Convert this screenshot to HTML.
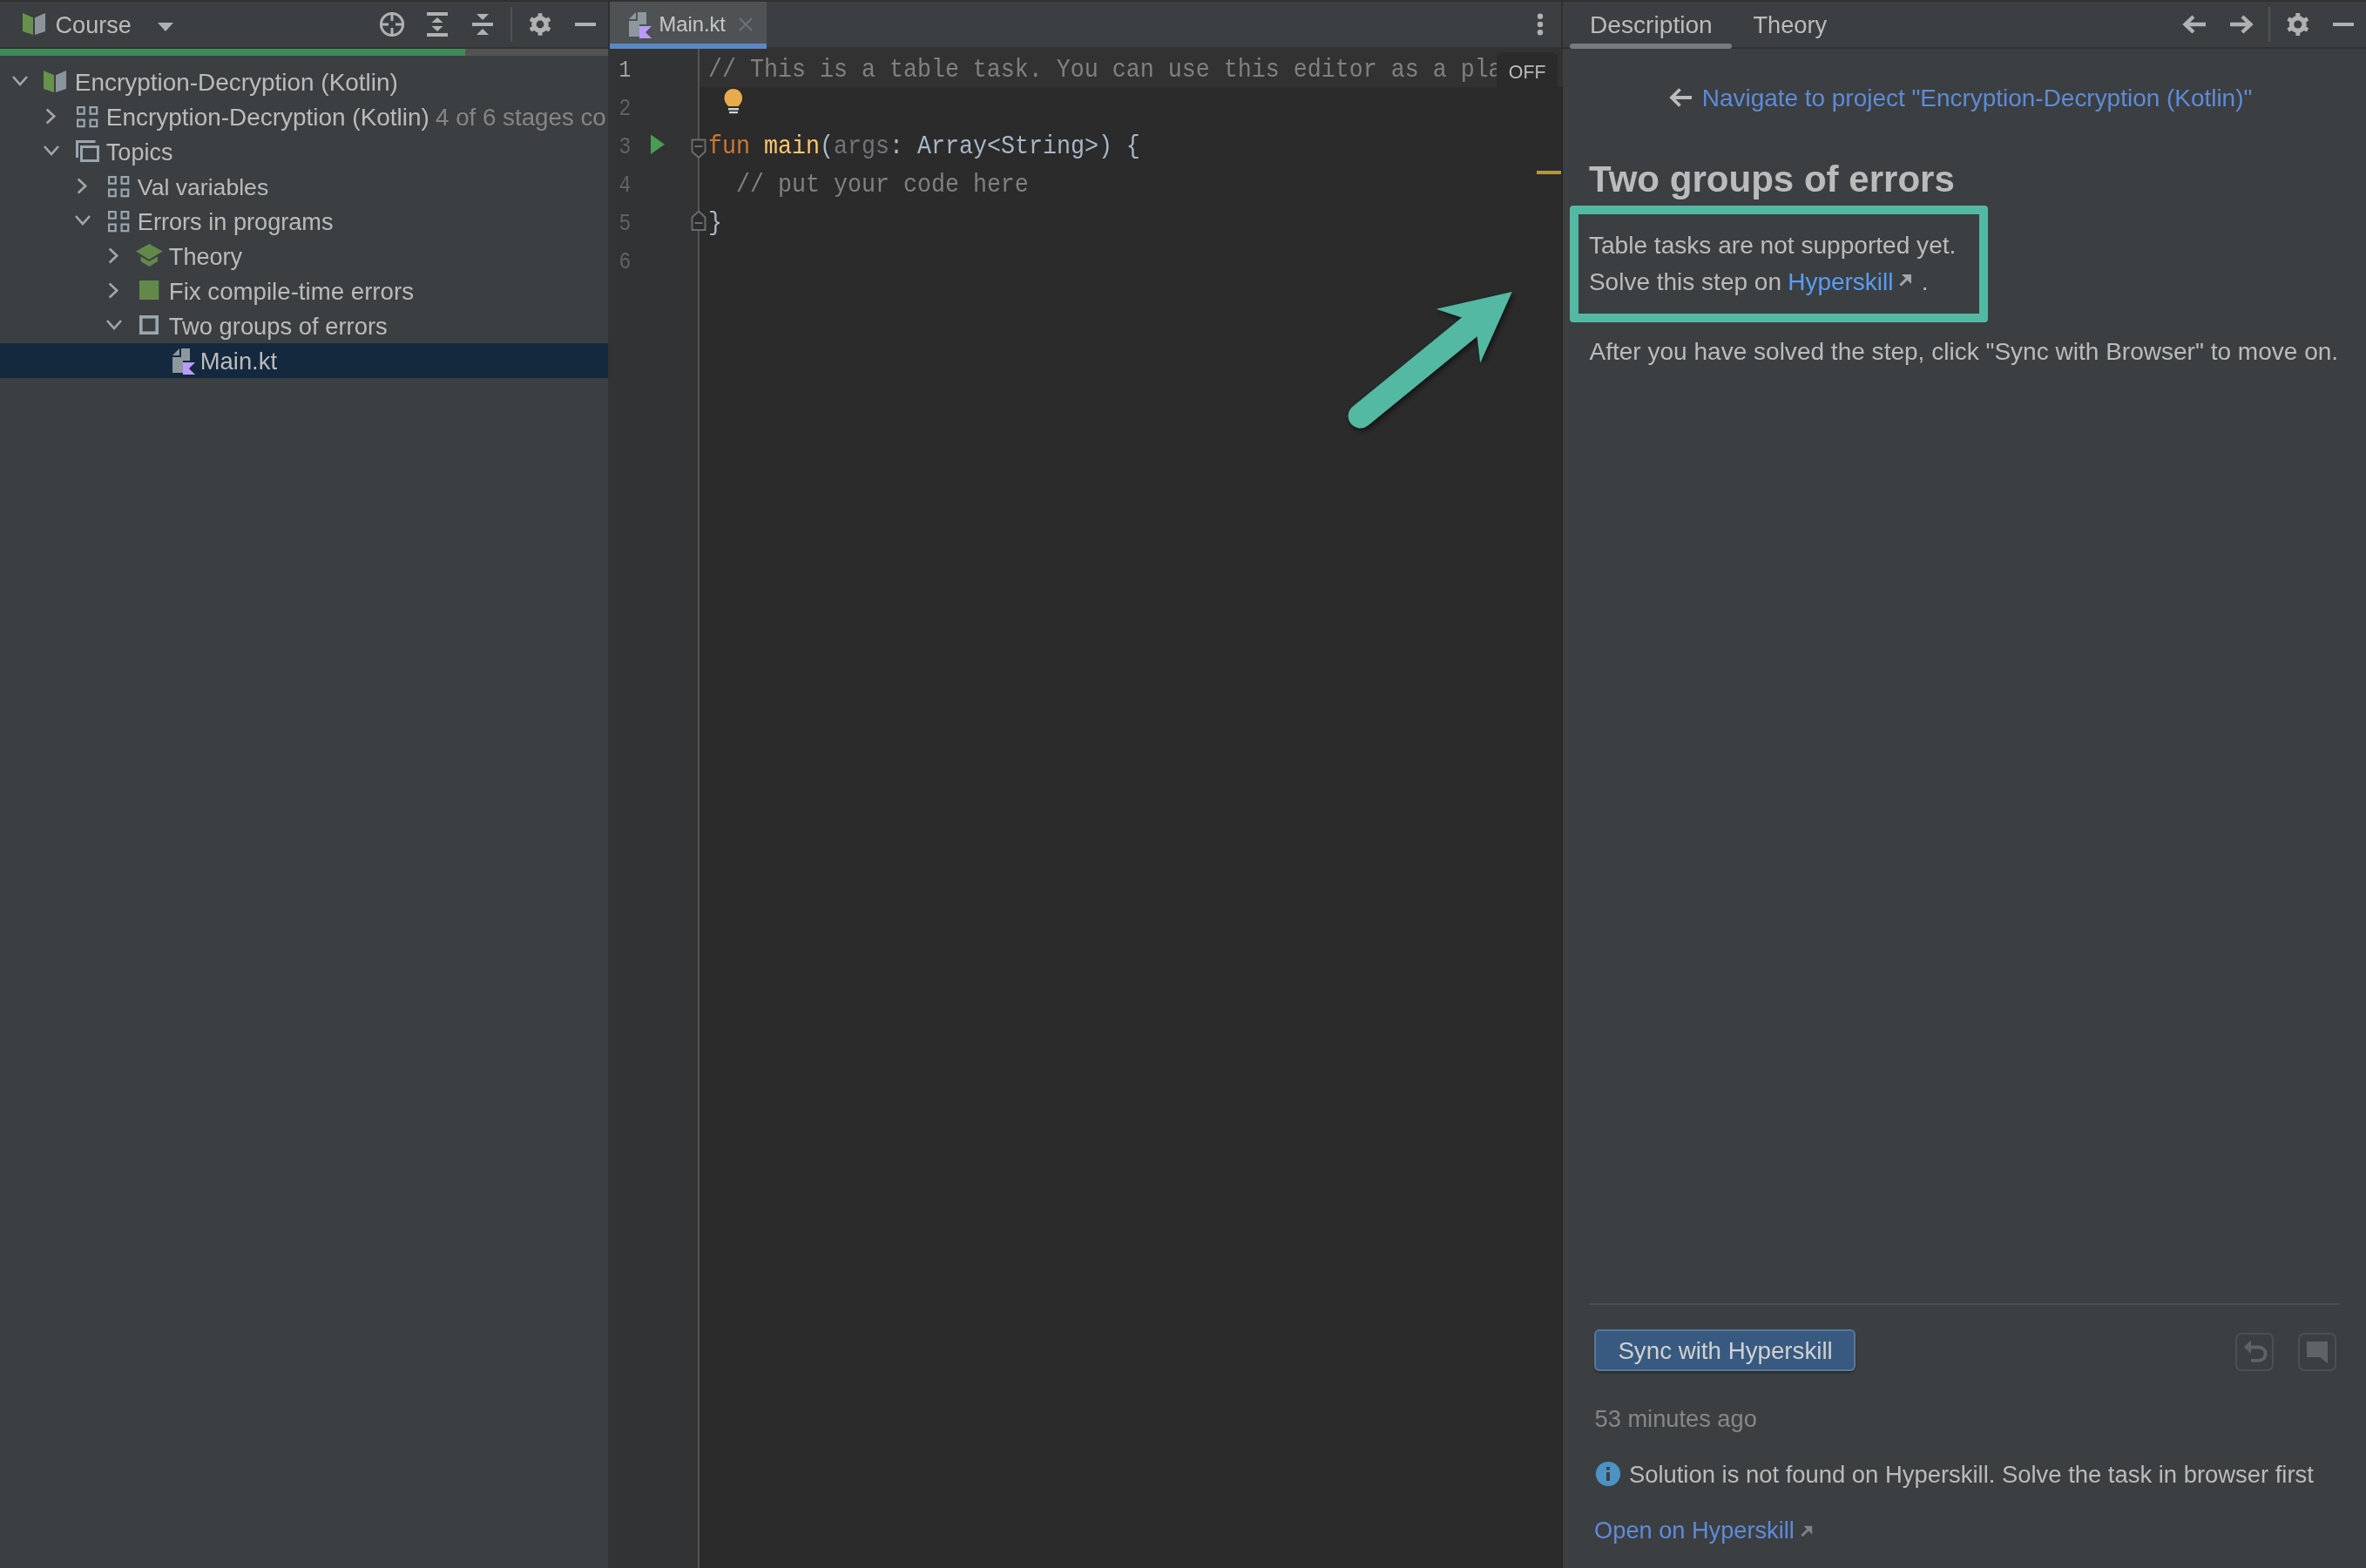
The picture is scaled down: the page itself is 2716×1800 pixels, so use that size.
<!DOCTYPE html>
<html><head><meta charset="utf-8"><title>Course - Encryption-Decryption (Kotlin)</title>
<style>
html,body{margin:0;padding:0;background:#3c3f41;overflow:hidden;width:2716px;height:1800px}
svg{display:block}
text{white-space:pre}
svg{will-change:transform}
</style></head><body>
<svg width="2716" height="1800" viewBox="0 0 2716 1800">
<defs><clipPath id="clipL"><rect x="0" y="0" width="697" height="1800"/></clipPath></defs>
<rect x="0" y="0" width="2716" height="1800" fill="#3c3f41" />
<rect x="0" y="0" width="2716" height="2" fill="#313131" />
<rect x="0" y="54" width="698" height="2" fill="#323232" />
<rect x="0" y="56" width="534" height="8" fill="#3f8c58" />
<rect x="534" y="56" width="164" height="8" fill="#535353" />
<rect x="0" y="394" width="698" height="40" fill="#14293e" />
<rect x="698" y="2" width="2" height="54" fill="#303030" />
<rect x="700" y="54" width="1092" height="2" fill="#323232" />
<rect x="700" y="2" width="180" height="48" fill="#4e5254" />
<rect x="700" y="50" width="180" height="6" fill="#5889c6" />
<rect x="698" y="56" width="103" height="1744" fill="#313335" />
<rect x="801" y="56" width="2" height="1744" fill="#555555" />
<rect x="803" y="56" width="989" height="1744" fill="#2b2b2b" />
<rect x="803" y="56" width="989" height="44" fill="#323232" />
<rect x="1792" y="2" width="2" height="1798" fill="#282828" />
<rect x="1792" y="2" width="2" height="52" fill="#303030" />
<rect x="1792" y="56" width="2" height="44" fill="#323232" />
<rect x="1794" y="54" width="922" height="2" fill="#323232" />
<rect x="1802" y="50" width="186" height="6" fill="#767b80" rx="3" />
<polygon points="26.00,14.90 38.00,20.20 38.00,40.00 26.00,35.90" fill="#66924c"/>
<polygon points="40.00,20.20 52.00,14.90 52.00,35.90 40.00,40.00" fill="#8b939b"/>
<text x="63.54500000000001" y="37.9" font-family='"Liberation Sans", sans-serif' font-size="27.1" font-weight="400" fill="#bbbbbb" >Course</text>
<polygon points="181,26 199,26 190,36" fill="#afb1b3"/>
<circle cx="450" cy="28" r="12.6" fill="none" stroke="#afb1b3" stroke-width="3"/>
<path d="M450 14 V24 M450 32 V42 M436 28 H446 M454 28 H464" stroke="#afb1b3" stroke-width="3"/>
<rect x="490" y="14" width="24" height="4" fill="#afb1b3"/><rect x="490" y="38" width="24" height="4" fill="#afb1b3"/>
<polygon points="495.5,26 508.5,26 502,20" fill="#afb1b3"/><polygon points="495.5,30 508.5,30 502,36" fill="#afb1b3"/>
<rect x="542" y="26" width="24" height="4" fill="#afb1b3"/>
<polygon points="547,16 561,16 554,23" fill="#afb1b3"/><polygon points="547,40 561,40 554,33" fill="#afb1b3"/>
<rect x="586" y="8" width="2" height="40" fill="#515151" />
<g fill="#afb1b3"><circle cx="620" cy="28" r="9.799999999999999"/><rect x="617.5" y="15.2" width="5.0" height="12.8" rx="0.8" transform="rotate(0.0 620 28)"/><rect x="617.5" y="15.2" width="5.0" height="12.8" rx="0.8" transform="rotate(60.0 620 28)"/><rect x="617.5" y="15.2" width="5.0" height="12.8" rx="0.8" transform="rotate(120.0 620 28)"/><rect x="617.5" y="15.2" width="5.0" height="12.8" rx="0.8" transform="rotate(180.0 620 28)"/><rect x="617.5" y="15.2" width="5.0" height="12.8" rx="0.8" transform="rotate(240.0 620 28)"/><rect x="617.5" y="15.2" width="5.0" height="12.8" rx="0.8" transform="rotate(300.0 620 28)"/></g><circle cx="620" cy="28" r="4.4" fill="#3c3f41"/>
<rect x="660" y="26" width="24" height="4" fill="#afb1b3" />
<path d="M15 88 L23 97 L31 88" fill="none" stroke="#a4a6a8" stroke-width="2.6"/>
<polygon points="50.00,81.00 62.00,86.30 62.00,106.10 50.00,102.00" fill="#66924c"/>
<polygon points="64.00,86.30 76.00,81.00 76.00,102.00 64.00,106.10" fill="#8b939b"/>
<text x="85.764" y="103.7" font-family='"Liberation Sans", sans-serif' font-size="27.95" font-weight="400" fill="#bbbbbb" >Encryption-Decryption (Kotlin)</text>
<path d="M53.7 125.5 L62.2 133.5 L53.7 141.5" fill="none" stroke="#a4a6a8" stroke-width="2.6"/>
<rect x="89.1" y="123.1" width="7.6" height="7.6" fill="none" stroke="#9aa7b0" stroke-width="2.2"/><rect x="89.1" y="137.6" width="7.6" height="7.6" fill="none" stroke="#9aa7b0" stroke-width="2.2"/><rect x="103.6" y="123.1" width="7.6" height="7.6" fill="none" stroke="#9aa7b0" stroke-width="2.2"/><rect x="103.6" y="137.6" width="7.6" height="7.6" fill="none" stroke="#9aa7b0" stroke-width="2.2"/>
<text x="121.764" y="143.7" font-family='"Liberation Sans", sans-serif' font-size="27.95" font-weight="400" fill="#bbbbbb" >Encryption-Decryption (Kotlin)</text>
<path d="M51 168 L59 177 L67 168" fill="none" stroke="#a4a6a8" stroke-width="2.6"/>
<path d="M88.5 181 V162.5 H109.5" fill="none" stroke="#9aa7b0" stroke-width="3"/>
<rect x="93.5" y="168.5" width="19" height="16" fill="none" stroke="#9aa7b0" stroke-width="3"/>
<text x="121.8368" y="183.7" font-family='"Liberation Sans", sans-serif' font-size="27.04" font-weight="400" fill="#bbbbbb" >Topics</text>
<path d="M89.7 205.5 L98.2 213.5 L89.7 221.5" fill="none" stroke="#a4a6a8" stroke-width="2.6"/>
<rect x="125.1" y="203.1" width="7.6" height="7.6" fill="none" stroke="#9aa7b0" stroke-width="2.2"/><rect x="125.1" y="217.6" width="7.6" height="7.6" fill="none" stroke="#9aa7b0" stroke-width="2.2"/><rect x="139.6" y="203.1" width="7.6" height="7.6" fill="none" stroke="#9aa7b0" stroke-width="2.2"/><rect x="139.6" y="217.6" width="7.6" height="7.6" fill="none" stroke="#9aa7b0" stroke-width="2.2"/>
<text x="157.8704" y="223.7" font-family='"Liberation Sans", sans-serif' font-size="26.62" font-weight="400" fill="#bbbbbb" >Val variables</text>
<path d="M87 248 L95 257 L103 248" fill="none" stroke="#a4a6a8" stroke-width="2.6"/>
<rect x="125.1" y="243.1" width="7.6" height="7.6" fill="none" stroke="#9aa7b0" stroke-width="2.2"/><rect x="125.1" y="257.6" width="7.6" height="7.6" fill="none" stroke="#9aa7b0" stroke-width="2.2"/><rect x="139.6" y="243.1" width="7.6" height="7.6" fill="none" stroke="#9aa7b0" stroke-width="2.2"/><rect x="139.6" y="257.6" width="7.6" height="7.6" fill="none" stroke="#9aa7b0" stroke-width="2.2"/>
<text x="157.828" y="263.7" font-family='"Liberation Sans", sans-serif' font-size="27.15" font-weight="400" fill="#bbbbbb" >Errors in programs</text>
<path d="M125.7 285.5 L134.2 293.5 L125.7 301.5" fill="none" stroke="#a4a6a8" stroke-width="2.6"/>
<polygon points="156,288.5 171.3,280 186.6,288.5 171.3,298" fill="#62894a"/>
<polygon points="161.6,294.5 171.3,300 181,294.5 181,300 171.3,306 161.6,300" fill="#62894a"/>
<text x="193.832" y="303.7" font-family='"Liberation Sans", sans-serif' font-size="27.1" font-weight="400" fill="#bbbbbb" >Theory</text>
<path d="M125.7 325.5 L134.2 333.5 L125.7 341.5" fill="none" stroke="#a4a6a8" stroke-width="2.6"/>
<rect x="160" y="322" width="22.3" height="22" fill="#62894a" />
<text x="193.7872" y="343.7" font-family='"Liberation Sans", sans-serif' font-size="27.66" font-weight="400" fill="#bbbbbb" >Fix compile-time errors</text>
<path d="M123 368 L131 377 L139 368" fill="none" stroke="#a4a6a8" stroke-width="2.6"/>
<rect x="161.8" y="363.8" width="18.4" height="18.4" fill="none" stroke="#9aa7b0" stroke-width="3.6"/>
<text x="193.8112" y="383.7" font-family='"Liberation Sans", sans-serif' font-size="27.36" font-weight="400" fill="#bbbbbb" >Two groups of errors</text>
<text x="229.8104" y="423.7" font-family='"Liberation Sans", sans-serif' font-size="27.37" font-weight="400" fill="#bbbbbb" >Main.kt</text>
<polygon points="198.00,408.00 206.00,400.00 206.00,408.00" fill="#8d979e"/>
<polygon points="208.00,400.00 218.00,400.00 218.00,414.00 210.00,414.00 210.00,428.00 198.00,428.00 198.00,410.00 208.00,410.00" fill="#8d979e"/>
<polygon points="210.00,416.00 224.00,416.00 217.00,423.00 224.00,430.00 210.00,430.00" fill="#b99bf8"/>
<g clip-path="url(#clipL)">
<text x="500.04540000000003" y="143.6" font-family='"Liberation Sans", sans-serif' font-size="27.73" font-weight="400" fill="#858585" >4 of 6 stages completed</text>
</g>
<rect x="698" y="56" width="0" height="0" fill="none" />
<polygon points="722.00,22.00 730.00,14.00 730.00,22.00" fill="#8d979e"/>
<polygon points="732.00,14.00 742.00,14.00 742.00,28.00 734.00,28.00 734.00,42.00 722.00,42.00 722.00,24.00 732.00,24.00" fill="#8d979e"/>
<polygon points="734.00,30.00 748.00,30.00 741.00,37.00 748.00,44.00 734.00,44.00" fill="#b99bf8"/>
<text x="756.6048" y="36" font-family='"Liberation Sans", sans-serif' font-size="23.69" font-weight="400" fill="#c8c8c8" >Main.kt</text>
<path d="M849 21 L863 35 M863 21 L849 35" stroke="#6f7375" stroke-width="2"/>
<circle cx="1768" cy="18.8" r="3.2" fill="#afb1b3"/>
<circle cx="1768" cy="28" r="3.2" fill="#afb1b3"/>
<circle cx="1768" cy="37.2" r="3.2" fill="#afb1b3"/>
<text x="710.5" y="88" font-family='"Liberation Mono", monospace' font-size="26.67" font-weight="400" fill="#a4a3a3" transform="translate(711 88) scale(0.86 1.07) translate(-711 -88)">1</text>
<text x="710.5" y="132" font-family='"Liberation Mono", monospace' font-size="26.67" font-weight="400" fill="#606366" transform="translate(711 132) scale(0.86 1.07) translate(-711 -132)">2</text>
<text x="710.5" y="176" font-family='"Liberation Mono", monospace' font-size="26.67" font-weight="400" fill="#606366" transform="translate(711 176) scale(0.86 1.07) translate(-711 -176)">3</text>
<text x="710.5" y="220" font-family='"Liberation Mono", monospace' font-size="26.67" font-weight="400" fill="#606366" transform="translate(711 220) scale(0.86 1.07) translate(-711 -220)">4</text>
<text x="710.5" y="264" font-family='"Liberation Mono", monospace' font-size="26.67" font-weight="400" fill="#606366" transform="translate(711 264) scale(0.86 1.07) translate(-711 -264)">5</text>
<text x="710.5" y="308" font-family='"Liberation Mono", monospace' font-size="26.67" font-weight="400" fill="#606366" transform="translate(711 308) scale(0.86 1.07) translate(-711 -308)">6</text>
<polygon points="747,154.5 763,165.8 747,177" fill="#499c54"/>
<path d="M794.5 160.5 H809.5 V174 L802 181 L794.5 174 Z M797.5 168 H806.5" fill="#2b2b2b" stroke="#6b6b6b" stroke-width="2"/>
<path d="M794.5 264 V249.5 L802 242.5 L809.5 249.5 V264 Z M797.5 256 H806.5" fill="#2b2b2b" stroke="#6b6b6b" stroke-width="2"/>
<text x="813" y="88" font-family='"Liberation Mono", monospace' font-size="26.67" font-weight="400" fill="#808080" transform="translate(0 88) scale(1 1.1) translate(0 -88)">// This is a table task. You can use this editor as a pla</text>
<text x="813" y="176" font-family='"Liberation Mono", monospace' font-size="26.67" font-weight="400" fill="#cc7832" transform="translate(0 176) scale(1 1.1) translate(0 -176)">fun</text>
<text x="877" y="176" font-family='"Liberation Mono", monospace' font-size="26.67" font-weight="400" fill="#ffc66d" transform="translate(0 176) scale(1 1.1) translate(0 -176)">main</text>
<text x="941" y="176" font-family='"Liberation Mono", monospace' font-size="26.67" font-weight="400" fill="#a9b7c6" transform="translate(0 176) scale(1 1.1) translate(0 -176)">(</text>
<text x="957" y="176" font-family='"Liberation Mono", monospace' font-size="26.67" font-weight="400" fill="#72737a" transform="translate(0 176) scale(1 1.1) translate(0 -176)">args</text>
<text x="1021" y="176" font-family='"Liberation Mono", monospace' font-size="26.67" font-weight="400" fill="#a9b7c6" transform="translate(0 176) scale(1 1.1) translate(0 -176)">: Array&lt;String&gt;) {</text>
<text x="845" y="220" font-family='"Liberation Mono", monospace' font-size="26.67" font-weight="400" fill="#808080" transform="translate(0 220) scale(1 1.1) translate(0 -220)">// put your code here</text>
<text x="813" y="264" font-family='"Liberation Mono", monospace' font-size="26.67" font-weight="400" fill="#a9b7c6" transform="translate(0 264) scale(1 1.1) translate(0 -264)">}</text>
<path d="M836 116 C832 112 831.5 108.5 831.5 106.5 C831.5 100.5 836 96 841.8 96 C847.6 96 852 100.5 852 106.5 C852 108.5 851.5 112 847.5 116 Z" fill="#e8ab4c" transform="translate(0,6)"/>
<rect x="836" y="124" width="12" height="2.5" fill="#d0d0d0" />
<rect x="837" y="128" width="10" height="2.2" fill="#d0d0d0" />
<path d="M1718 100 V68 Q1718 60 1726 60 H1780 Q1788 60 1788 68 V100 Z" fill="#2b2b2b"/>
<text x="1731.8476" y="90" font-family='"Liberation Sans", sans-serif' font-size="21.31" font-weight="400" fill="#bbbbbb" >OFF</text>
<rect x="1764" y="196" width="28" height="4" fill="#b8963a" />
<defs><filter id="sh" x="-20%" y="-20%" width="140%" height="140%"><feGaussianBlur in="SourceAlpha" stdDeviation="3"/><feOffset dx="2" dy="3"/><feComponentTransfer><feFuncA type="linear" slope="0.6"/></feComponentTransfer><feMerge><feMergeNode/><feMergeNode in="SourceGraphic"/></feMerge></filter></defs>
<g filter="url(#sh)" fill="#53b9a3"><path d="M1561.7 477.5 L1686 376" stroke="#53b9a3" stroke-width="28" stroke-linecap="round"/><polygon points="1735.7,335 1648.7,354.7 1678.2,364.5 1695.7,386.3 1699.2,416.5"/></g>
<text x="1825.0488" y="38.2" font-family='"Liberation Sans", sans-serif' font-size="28.14" font-weight="400" fill="#bbbbbb" >Description</text>
<text x="2012.4554" y="38.2" font-family='"Liberation Sans", sans-serif' font-size="27.23" font-weight="400" fill="#bbbbbb" >Theory</text>
<path d="M2532 28 H2508 M2518 19 L2508.5 28 L2518 37" fill="none" stroke="#afb1b3" stroke-width="4.4"/>
<path d="M2560 28 H2584 M2574 19 L2583.5 28 L2574 37" fill="none" stroke="#afb1b3" stroke-width="4.4"/>
<rect x="2604" y="8" width="2" height="40" fill="#515151" />
<g fill="#afb1b3"><circle cx="2637.8" cy="28" r="10.0"/><rect x="2635.3" y="15" width="5.0" height="13" rx="0.8" transform="rotate(0.0 2637.8 28)"/><rect x="2635.3" y="15" width="5.0" height="13" rx="0.8" transform="rotate(60.0 2637.8 28)"/><rect x="2635.3" y="15" width="5.0" height="13" rx="0.8" transform="rotate(120.0 2637.8 28)"/><rect x="2635.3" y="15" width="5.0" height="13" rx="0.8" transform="rotate(180.0 2637.8 28)"/><rect x="2635.3" y="15" width="5.0" height="13" rx="0.8" transform="rotate(240.0 2637.8 28)"/><rect x="2635.3" y="15" width="5.0" height="13" rx="0.8" transform="rotate(300.0 2637.8 28)"/></g><circle cx="2637.8" cy="28" r="4.6" fill="#3c3f41"/>
<rect x="2678" y="26" width="24" height="4" fill="#afb1b3" />
<path d="M1942 112 H1919 M1928.5 102.5 L1919 112 L1928.5 121.5" fill="none" stroke="#bbbbbb" stroke-width="3.8"/>
<text x="1953.764" y="121.8" font-family='"Liberation Sans", sans-serif' font-size="27.95" font-weight="400" fill="#5e8bd8" >Navigate to project "Encryption-Decryption (Kotlin)"</text>
<text x="1824.0793" y="220" font-family='"Liberation Sans", sans-serif' font-size="42.07" font-weight="700" fill="#bbbbbb" transform="translate(0 220) scale(1 1.03) translate(0 -220)">Two groups of errors</text>
<path fill="#53b9a3" fill-rule="evenodd" d="M1806 236 H2278 Q2282 236 2282 240 V366 Q2282 370 2278 370 H1806 Q1802 370 1802 366 V240 Q1802 236 1806 236 Z M1812 246 V360 H2272 V246 Z"/>
<text x="1823.9382" y="290.8" font-family='"Liberation Sans", sans-serif' font-size="28.09" font-weight="400" fill="#bbbbbb" >Table tasks are not supported yet.</text>
<text x="1823.94" y="333.4" font-family='"Liberation Sans", sans-serif' font-size="28.0" font-weight="400" fill="#bbbbbb" >Solve this step on </text>
<text x="2052.1600000000003" y="333.1" font-family='"Liberation Sans", sans-serif' font-size="28.0" font-weight="400" fill="#589df6" >Hyperskill</text>
<path d="M2181.5 327.5 L2190 319" stroke="#a0a7ad" stroke-width="3"/><polygon points="2194,315 2194,326 2183,315" fill="#a0a7ad"/>
<text x="2205.76" y="333.1" font-family='"Liberation Sans", sans-serif' font-size="28" font-weight="400" fill="#bbbbbb" >.</text>
<text x="1824.5" y="413" font-family='"Liberation Sans", sans-serif' font-size="28.04" font-weight="400" fill="#bbbbbb" >After you have solved the step, click "Sync with Browser" to move on.</text>
<rect x="1824" y="1496" width="862" height="2" fill="#4b4d4f" />
<rect x="1831" y="1527" width="298" height="46" rx="5" fill="#375a80" stroke="#56789a" stroke-width="2" filter="url(#bsh)"/>
<defs><filter id="bsh" x="-5%" y="-20%" width="110%" height="150%"><feGaussianBlur in="SourceAlpha" stdDeviation="1"/><feOffset dx="0" dy="2"/><feComponentTransfer><feFuncA type="linear" slope="0.35"/></feComponentTransfer><feMerge><feMergeNode/><feMergeNode in="SourceGraphic"/></feMerge></filter></defs>
<text x="1857.3916" y="1560.2" font-family='"Liberation Sans", sans-serif' font-size="27.71" font-weight="400" fill="#d0d0d0" >Sync with Hyperskill</text>
<rect x="2567" y="1531" width="42" height="42" rx="6" fill="none" stroke="#4c5052" stroke-width="2"/>
<rect x="2639" y="1531" width="42" height="42" rx="6" fill="none" stroke="#4c5052" stroke-width="2"/>
<path d="M2584 1546.5 H2593 A7.5 7.5 0 0 1 2593 1561.8 H2584" fill="none" stroke="#5f6366" stroke-width="3.8"/><polygon points="2576,1546.3 2584,1538.5 2584,1554" fill="#5f6366"/>
<polygon points="2648,1540 2672,1540 2672,1565 2663,1558 2648,1558" fill="#5f6366"/>
<text x="1830.51" y="1638" font-family='"Liberation Sans", sans-serif' font-size="27.25" font-weight="400" fill="#878787" >53 minutes ago</text>
<circle cx="1846" cy="1692" r="14.1" fill="#4d92c4"/>
<rect x="1844" y="1684" width="4" height="3.5" fill="#3c3f41" />
<rect x="1844" y="1690" width="4" height="10" fill="#3c3f41" />
<text x="1869.9036" y="1702.3" font-family='"Liberation Sans", sans-serif' font-size="27.41" font-weight="400" fill="#bbbbbb" >Solution is not found on Hyperskill. Solve the task in browser first</text>
<text x="1830.112" y="1765.8" font-family='"Liberation Sans", sans-serif' font-size="27.2" font-weight="400" fill="#5e8bd8" >Open on Hyperskill</text>
<path d="M2068.5 1763 L2076 1755.5" stroke="#7f8487" stroke-width="2.6"/><polygon points="2080.2,1751.8 2080.2,1761.5 2070.5,1751.8" fill="#7f8487"/>
</svg>
</body></html>
